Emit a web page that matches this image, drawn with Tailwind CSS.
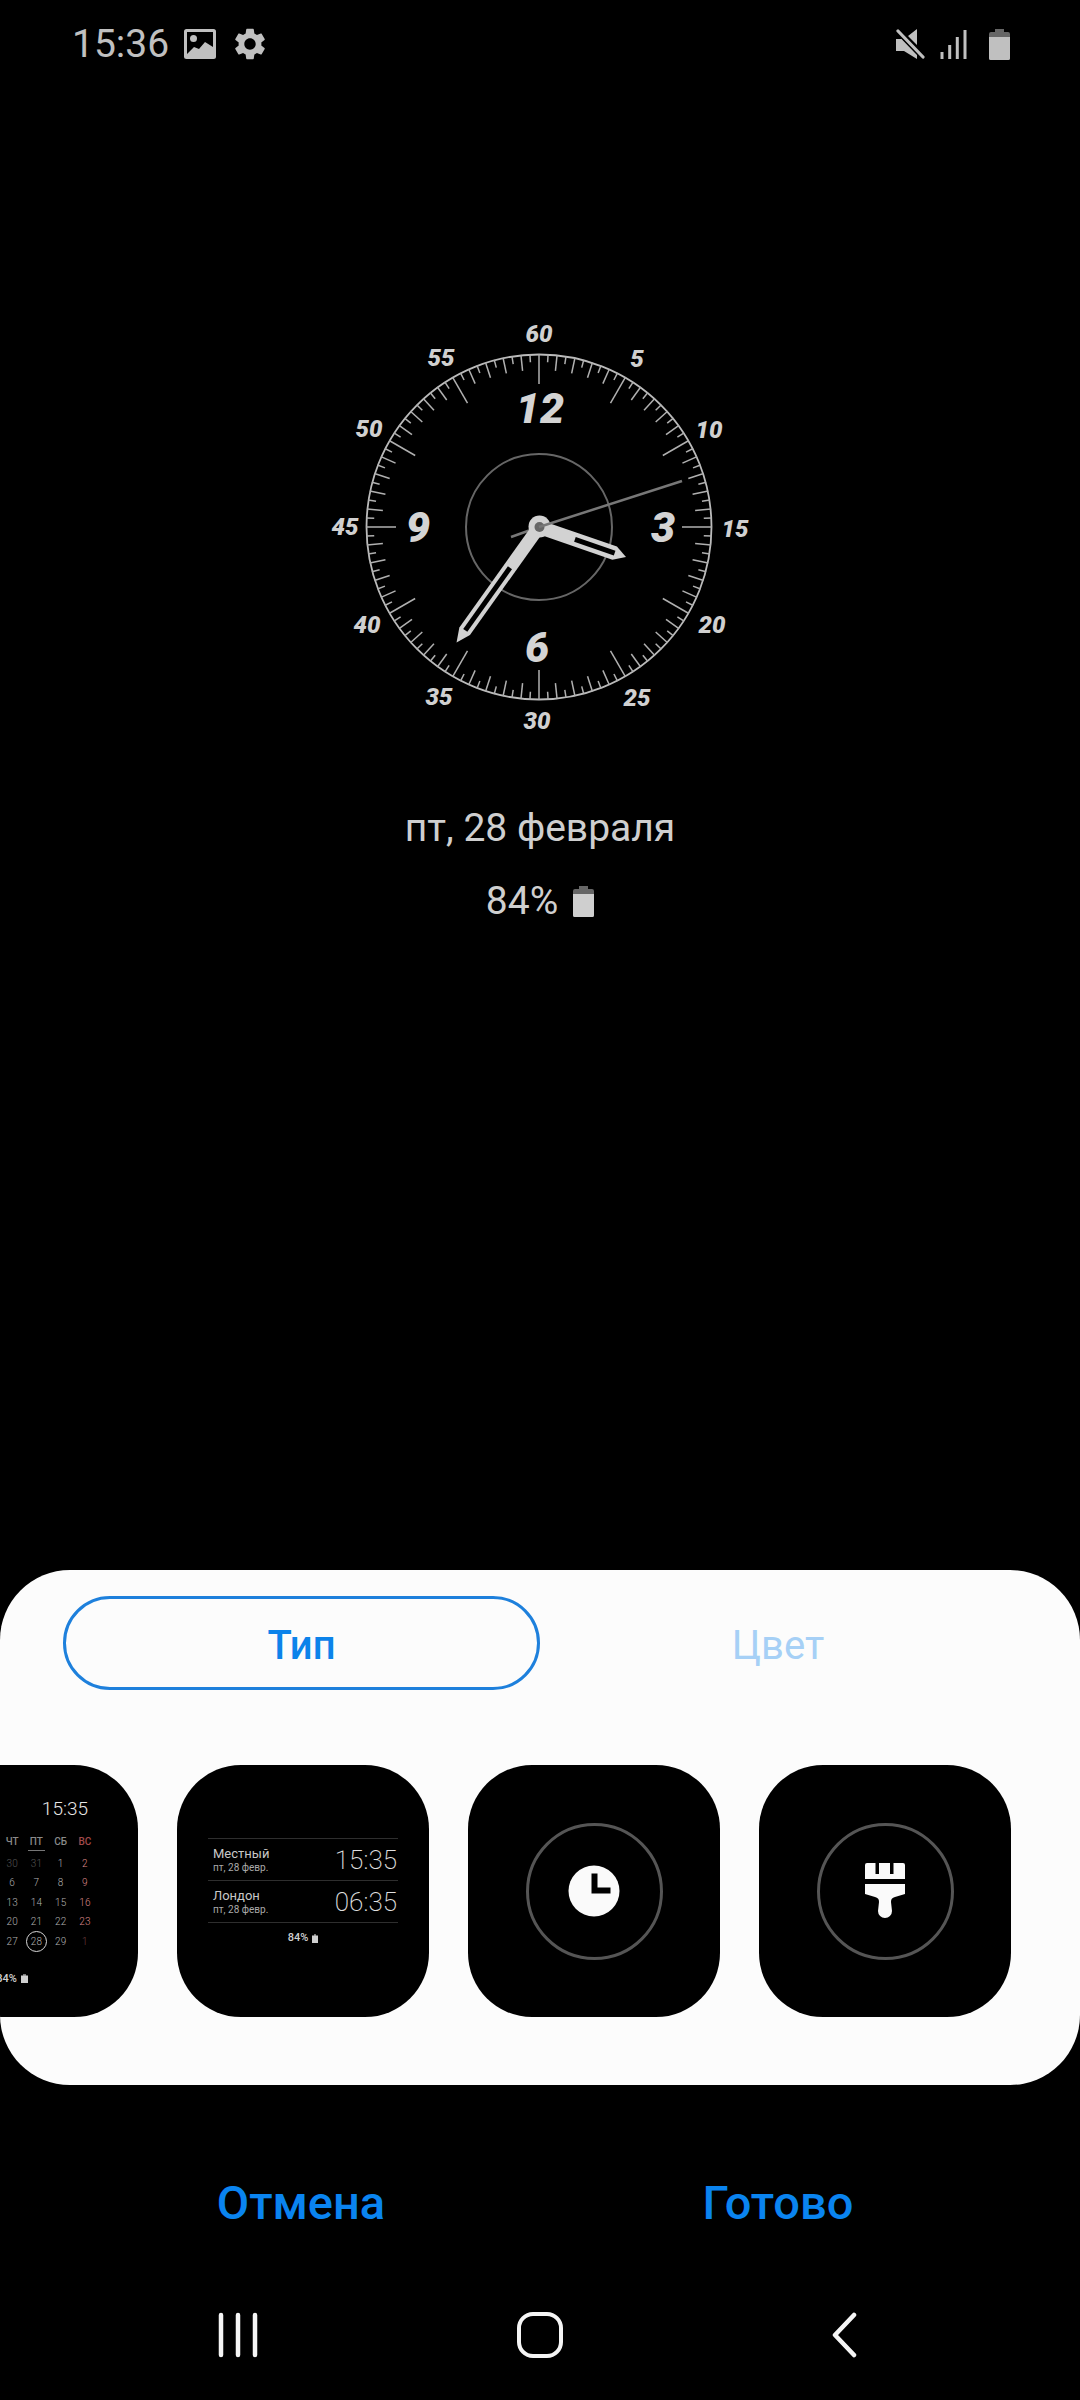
<!DOCTYPE html>
<html lang="ru">
<head>
<meta charset="UTF-8">
<meta name="viewport" content="width=device-width, initial-scale=1.0">
<script src="https://cdn.jsdelivr.net/npm/@tailwindcss/browser@4"></script>
<title>Always On Display</title>
</head>
<body class="bg-black w-[1080px] h-[2400px] overflow-hidden [font-family:Roboto,sans-serif]">

<!-- status bar -->
<div class="h-[88px] flex items-center pl-[72px] text-[#c0c0c0]">
	<span class="text-[39px] leading-[44px] font-normal w-[112px]">15:36</span>
	<svg class="w-[32px] h-[30px]" viewBox="0 0 32 30"><rect width="32" height="30" rx="2.500" fill="#c0c0c0"/><path fill="#000" d="M3 3H29V18L21 13L15 20L10 18L3 25z"/><circle cx="9.500" cy="9.500" r="3.500" fill="#c0c0c0"/></svg>
	<svg class="w-[38px] h-[38px] ml-[15px]" viewBox="0 0 24 24"><path fill="#c0c0c0" d="M19.14 12.94c.04-.3.06-.61.06-.94 0-.32-.02-.64-.07-.94l2.03-1.58c.18-.14.23-.41.12-.61l-1.92-3.32c-.12-.22-.37-.29-.59-.22l-2.39.96c-.5-.38-1.03-.7-1.62-.94l-.36-2.54c-.04-.24-.24-.41-.48-.41h-3.84c-.24 0-.43.17-.47.41l-.36 2.54c-.59.24-1.13.57-1.62.94l-2.39-.96c-.22-.08-.47 0-.59.22L2.74 8.87c-.12.21-.08.47.12.61l2.03 1.58c-.05.3-.09.63-.09.94s.02.64.07.94l-2.03 1.58c-.18.14-.23.41-.12.61l1.92 3.32c.12.22.37.29.59.22l2.39-.96c.5.38 1.03.7 1.62.94l.36 2.54c.05.24.24.41.48.41h3.84c.24 0 .44-.17.47-.41l.36-2.54c.59-.24 1.13-.56 1.62-.94l2.39.96c.22.08.47 0 .59-.22l1.92-3.32c.12-.22.07-.47-.12-.61l-2.01-1.58zM12 15.6c-1.98 0-3.6-1.62-3.6-3.6s1.62-3.6 3.6-3.6 3.6 1.62 3.6 3.6-1.62 3.6-3.6 3.6z"/></svg>
	<svg class="w-[29px] h-[30px] ml-[627px]" viewBox="0 0 29 30"><path fill="#c0c0c0" d="M0 10h6l15 15v5l-13-8H0zM12 7L21 0v16z"/><path stroke="#000" stroke-width="6" d="M0 0L28 29"/><path stroke="#c0c0c0" stroke-width="3.200" stroke-linecap="round" d="M2 2L27 28"/></svg>
	<svg class="w-[28px] h-[30px] ml-[15px]" viewBox="0 0 28 30"><path stroke="#c0c0c0" stroke-width="3" d="M2 30v-7M9.700 30V16M17.300 30V8M25 30V1"/></svg>
	<svg class="w-[21px] h-[31px] ml-[21px]" viewBox="0 0 21 31"><path fill="#666" d="M6 0h9v3h4a2 2 0 0 1 2 2v5H0V5a2 2 0 0 1 2-2h4z"/><path fill="#c0c0c0" d="M0 8h21v21.500a1.500 1.500 0 0 1-1.500 1.500h-18A1.500 1.500 0 0 1 0 29.500z"/></svg>
</div>

<!-- clock face, ticks get added by script -->
<svg id="clock" class="block mt-[212px] ml-[310px] w-[460px] h-[460px]" viewBox="310 300 460 460">
	<circle cx="539" cy="527" r="172.500" fill="none" stroke="#bbb" stroke-width="1.800"/>
	<g id="ticks"></g>
	<circle cx="539" cy="527" r="73" fill="none" stroke="#666" stroke-width="2"/>
	<g class="italic font-black" fill="#d0d0d0" text-anchor="middle" font-size="24">
		<text x="539" y="342">60</text>
		<text x="441" y="366">55</text>
		<text x="637" y="367">5</text>
		<text x="369" y="437">50</text>
		<text x="709" y="438">10</text>
		<text x="345" y="535">45</text>
		<text x="735" y="537">15</text>
		<text x="367" y="633">40</text>
		<text x="712" y="633">20</text>
		<text x="439" y="705">35</text>
		<text x="637" y="706">25</text>
		<text x="537" y="729">30</text>
	</g>
	<g class="italic font-black" fill="#d4d4d4" text-anchor="middle" font-size="43">
		<text x="540" y="423">12</text>
		<text x="418" y="542">9</text>
		<text x="663" y="542">3</text>
		<text x="537" y="662">6</text>
	</g>
	<line x1="539" y1="527" x2="511" y2="537" stroke="#777" stroke-width="2.500"/>
	<g transform="translate(539 527) rotate(109)">
		<path fill="#d2d2d2" d="M-7 0L-7-80L0-92L7-80L7 0z"/>
		<path fill="#000" d="M-2.500-38H2.500V-80H-2.500z"/>
	</g>
	<g transform="translate(539 527) rotate(215.500)">
		<path fill="#d2d2d2" d="M-6.500 0L-6.500-128L0-142L6.500-128L6.500 0z"/>
		<path fill="#000" d="M-2.500-50H2.500V-127H-2.500z"/>
	</g>
	<circle cx="539.500" cy="526.500" r="11" fill="#d2d2d2"/>
	<circle cx="539.500" cy="527" r="5" fill="#666"/>
	<line x1="539" y1="527" x2="682" y2="481" stroke="#777" stroke-width="2.500"/>
</svg>

<div class="mt-[48px] text-center text-[39px] leading-[40px] text-[#cfcfcf]">пт, 28 февраля</div>
<div class="mt-[33px] h-[40px] flex justify-center items-center gap-[15px] text-[39px] leading-[40px] text-[#cfcfcf]">
	<span>84%</span>
	<svg class="w-[21px] h-[31px]" viewBox="0 0 21 31"><path fill="#666" d="M6 0h9v3h4a2 2 0 0 1 2 2v5H0V5a2 2 0 0 1 2-2h4z"/><path fill="#cfcfcf" d="M0 8h21v21.500a1.500 1.500 0 0 1-1.500 1.500h-18A1.500 1.500 0 0 1 0 29.500z"/></svg>
</div>

<!-- picker panel -->
<div class="mt-[649px] h-[515px] bg-[#fcfcfc] rounded-[70px] pt-[26px] overflow-hidden">
	<div class="flex pl-[63px]">
		<div class="w-[477px] h-[94px] pt-[5px] border-[3px] border-[#1e80dc] rounded-full flex items-center justify-center text-[40px] font-medium text-[#0c83ea]">Тип</div>
		<div class="w-[476px] h-[94px] pt-[5px] flex items-center justify-center text-[40px] text-[#a6d0f6]">Цвет</div>
	</div>
	<div class="mt-[75px] flex gap-[39px] ml-[-114px] w-[1200px]">

		<!-- calendar -->
		<div class="w-[252px] h-[252px] shrink-0 bg-black rounded-[64px] overflow-hidden pt-[32px] text-[#b0b0b0]">
			<div class="text-right pr-[50px] text-[19px] leading-[24px] font-light text-[#e6e6e6]">15:35</div>
			<div class="ml-[114px] mr-[41px] mt-[11px] grid grid-cols-4 grid-rows-[22px_repeat(5,19.400px)] text-center text-[10px] leading-[19.400px] font-light">
				<span class="font-medium text-[#8a8a8a]">ЧТ</span><span class="font-medium text-[#8a8a8a] relative">ПТ<i class="absolute left-[4px] right-[4px] top-[18px] h-px bg-[#777]"></i></span><span class="font-medium text-[#8a8a8a]">СБ</span><span class="font-medium text-[#a04a4a]">ВС</span>
				<span class="text-[#555]">30</span><span class="text-[#555]">31</span><span>1</span><span class="text-[#d88]">2</span>
				<span>6</span><span>7</span><span>8</span><span class="text-[#d88]">9</span>
				<span>13</span><span>14</span><span>15</span><span class="text-[#d88]">16</span>
				<span>20</span><span>21</span><span>22</span><span class="text-[#d88]">23</span>
				<span>27</span><span class="relative">28<i class="absolute left-[2px] top-[-1px] w-[21px] h-[21px] rounded-full border border-[#d8d8d8]"></i></span><span>29</span><span class="text-[#6b3d3d]">1</span>
			</div>
			<div class="mt-[21px] flex justify-center items-center gap-[4px] text-[11px] leading-[14px] font-medium text-[#cfcfcf]">
				<span>84%</span><svg class="w-[7px] h-[9px]" viewBox="0 0 7 9"><path fill="#777" d="M2 0h3v2H2z"/><rect fill="#cfcfcf" y="1.500" width="7" height="7.500"/></svg>
			</div>
		</div>

		<!-- dual clock -->
		<div class="w-[252px] h-[252px] shrink-0 bg-black rounded-[64px] px-[31px] pt-[73px] text-[#c8c8c8]">
			<div class="border-y border-[#2e2e2e] h-[43px] flex items-center justify-between pl-[5px] pr-[1px]">
				<div class="flex flex-col">
					<span class="text-[13px] leading-[15px]">Местный</span>
					<span class="text-[10px] leading-[13px] text-[#aaa]">пт, 28 февр.</span>
				</div>
				<span class="text-[26px] leading-[32px] font-extralight text-[#e0e0e0]">15:35</span>
			</div>
			<div class="border-b border-[#2e2e2e] h-[42px] flex items-center justify-between pl-[5px] pr-[1px]">
				<div class="flex flex-col">
					<span class="text-[13px] leading-[15px]">Лондон</span>
					<span class="text-[10px] leading-[13px] text-[#aaa]">пт, 28 февр.</span>
				</div>
				<span class="text-[26px] leading-[32px] font-extralight text-[#e0e0e0]">06:35</span>
			</div>
			<div class="mt-[8px] flex justify-center items-center gap-[4px] text-[11px] leading-[14px] font-medium text-[#cfcfcf]">
				<span>84%</span><svg class="w-[6px] h-[9px]" viewBox="0 0 6 9"><path fill="#777" d="M2 0h2v2H2z"/><rect fill="#cfcfcf" y="1.500" width="6" height="7.500"/></svg>
			</div>
		</div>

		<!-- add clock -->
		<div class="w-[252px] h-[252px] shrink-0 bg-black rounded-[64px] flex items-center justify-center">
			<div class="w-[137px] h-[137px] rounded-full border-[3px] border-[#555] flex items-center justify-center">
				<svg class="w-[52px] h-[52px]" viewBox="0 0 52 52"><circle cx="26" cy="26" r="25.500" fill="#fafafa"/><path d="M26.500 8.500V25.500H42.500" fill="none" stroke="#000" stroke-width="6"/></svg>
			</div>
		</div>

		<!-- brush -->
		<div class="w-[252px] h-[252px] shrink-0 bg-black rounded-[64px] flex items-center justify-center">
			<div class="w-[137px] h-[137px] rounded-full border-[3px] border-[#555] flex items-center justify-center">
				<svg class="w-[40px] h-[56px]" viewBox="0 0 40 56"><path fill="#fafafa" d="M2 0h8.500v11H14V0h11v11h3.500V0H38a2 2 0 0 1 2 2v14H0V2a2 2 0 0 1 2-2z"/><path fill="#fafafa" d="M0 21h40v10l-10 3c-3 1-4 2-4 5l1 9a7 7 0 0 1-14 0l1-9c0-3-1-4-4-5L0 31z"/></svg>
			</div>
		</div>
	</div>
</div>

<!-- bottom actions -->
<div class="mt-[95px] flex pl-[63px] text-[47px] leading-[46px] font-medium text-[#0a84f0]">
	<div class="w-[476px] text-center">Отмена</div>
	<div class="w-[476px] ml-[1px] text-center">Готово</div>
</div>

<!-- navigation -->
<div class="mt-[86px] flex items-center h-[46px] pl-[218px]">
	<svg class="w-[40px] h-[46px]" viewBox="0 0 40 46"><path stroke="#f5f5f5" stroke-width="4.500" stroke-linecap="round" d="M3 3v40M20 3v40M37 3v40"/></svg>
	<svg class="w-[46px] h-[46px] ml-[259px]" viewBox="0 0 46 46"><rect x="2" y="2" width="42" height="42" rx="14" fill="none" stroke="#f5f5f5" stroke-width="4"/></svg>
	<svg class="w-[28px] h-[46px] ml-[267px]" viewBox="0 0 28 46"><path fill="none" stroke="#f5f5f5" stroke-width="4.500" stroke-linecap="round" stroke-linejoin="round" d="M24 3L5 23l19 20"/></svg>
</div>

<script>
	// dial ticks: every half minute, longer on the minute, longest on each five
	var ticks = document.getElementById("ticks");
	for (var i = 0; i < 120; i++) {
		var len = i % 10 == 0 ? 30 : (i % 2 == 0 ? 16 : 8);
		var a = i * Math.PI / 60;
		var line = document.createElementNS("http://www.w3.org/2000/svg", "line");
		line.setAttribute("x1", 539 + 173 * Math.sin(a));
		line.setAttribute("y1", 527 - 173 * Math.cos(a));
		line.setAttribute("x2", 539 + (173 - len) * Math.sin(a));
		line.setAttribute("y2", 527 - (173 - len) * Math.cos(a));
		line.setAttribute("stroke", "#b0b0b0");
		line.setAttribute("stroke-width", "1.500");
		ticks.appendChild(line);
	}
</script>
</body>
</html>
